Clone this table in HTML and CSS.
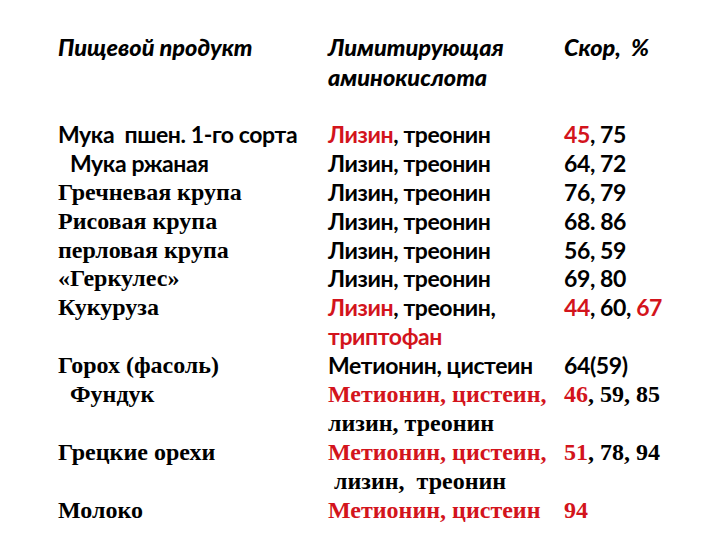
FILE: index.html
```html
<!DOCTYPE html>
<html lang="ru">
<head>
<meta charset="utf-8">
<link rel="stylesheet" href="styles.css">
</head>
<body>
<div class="slide">
  <div class="grid head">
    <div class="h">Пищевой продукт</div>
    <div class="h">Лимитирующая<br>аминокислота</div>
    <div class="h">Скор,  %</div>
  </div>
  <div class="grid body">
    <div class="s">Мука  пшен. 1-го сорта</div>
    <div class="s"><span class="r">Лизин</span>, треонин</div>
    <div class="s"><span class="r">45</span>, 75</div>

    <div class="s ind">Мука ржаная</div>
    <div class="s">Лизин, треонин</div>
    <div class="s">64, 72</div>

    <div class="t">Гречневая крупа</div>
    <div class="s">Лизин, треонин</div>
    <div class="s">76, 79</div>

    <div class="t">Рисовая крупа</div>
    <div class="s">Лизин, треонин</div>
    <div class="s">68. 86</div>

    <div class="t">перловая крупа</div>
    <div class="s">Лизин, треонин</div>
    <div class="s">56, 59</div>

    <div class="t">«Геркулес»</div>
    <div class="s">Лизин, треонин</div>
    <div class="s">69, 80</div>

    <div class="t">Кукуруза</div>
    <div class="s"><span class="r">Лизин</span>, треонин,</div>
    <div class="s"><span class="r">44</span>, 60, <span class="r">67</span></div>

    <div class="t"></div>
    <div class="s r">триптофан</div>
    <div class="s"></div>

    <div class="t">Горох (фасоль)</div>
    <div class="s">Метионин, цистеин</div>
    <div class="s">64(59)</div>

    <div class="t ind">Фундук</div>
    <div class="t r">Метионин, цистеин,</div>
    <div class="t"><span class="r">46</span>, 59, 85</div>

    <div class="t"></div>
    <div class="t">лизин, треонин</div>
    <div class="t"></div>

    <div class="t">Грецкие орехи</div>
    <div class="t r">Метионин, цистеин,</div>
    <div class="t"><span class="r">51</span>, 78, 94</div>

    <div class="t"></div>
    <div class="t ind2">лизин,  треонин</div>
    <div class="t"></div>

    <div class="t">Молоко</div>
    <div class="t r">Метионин, цистеин</div>
    <div class="t r">94</div>
  </div>
</div>
</body>
</html>
```

FILE: styles.css
```css
html, body {
  margin: 0;
  padding: 0;
  background: #ffffff;
}
.slide {
  width: 720px;
  height: 540px;
  box-sizing: border-box;
  padding: 32px 0 0 58px;
  color: #000000;
  overflow: hidden;
}
.grid {
  display: grid;
  grid-template-columns: 270px 236px 1fr;
}
.head {
  margin-bottom: 28px;
}
.h {
  font-family: Lato, "Liberation Sans", sans-serif;
  font-weight: 900;
  font-style: italic;
  font-size: 23.5px;
  line-height: 30px;
  white-space: pre;
}
.body {
  grid-auto-rows: 28.9px;
}
.s, .t {
  line-height: 28.9px;
  font-weight: 700;
  white-space: pre;
}
.s {
  font-family: Lato, "Liberation Sans", sans-serif;
  font-size: 23px;
  letter-spacing: -0.4px;
}
.t {
  font-family: "Liberation Serif", serif;
  font-size: 24px;
}
.r {
  color: #d3141c;
}
.ind {
  padding-left: 12px;
}
.ind2 {
  padding-left: 6px;
}
```
